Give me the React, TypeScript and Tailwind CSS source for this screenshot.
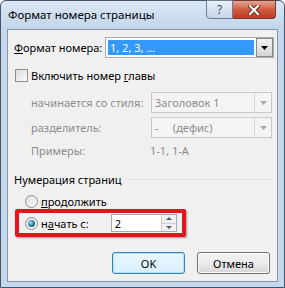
import React from "react";

function Arrow({ disabled }: { disabled?: boolean }) {
  return (
    <svg width="7" height="4" viewBox="0 0 7 4">
      <path d="M0 0h7L3.5 4z" fill={disabled ? "#a8a8a8" : "#000"} />
    </svg>
  );
}

function Radio({ checked }: { checked?: boolean }) {
  return (
    <span className="w-[13px] h-[13px] rounded-full border border-[#8f8f8f] bg-gradient-to-br from-[#e0e0e0] to-[#fafafa] flex items-center justify-center shrink-0">
      {checked && (
        <span className="w-[7px] h-[7px] rounded-full bg-[radial-gradient(circle_at_35%_35%,#9be0f5,#1e6f96_60%,#0d3c5e)]" />
      )}
    </span>
  );
}

function DisabledCombo({ text }: { text: string }) {
  return (
    <div className="ml-auto shrink-0 w-[121px] h-[21px] border border-[#c9c9c9] bg-[#f4f4f4] flex items-stretch">
      <span className="flex-1 pl-[3px] text-[#8c8c8c] flex items-center whitespace-pre">{text}</span>
      <span className="w-[17px] border-l border-[#d6d6d6] flex items-center justify-center">
        <Arrow disabled />
      </span>
    </div>
  );
}

export default function App() {
  return (
    <div
      className="w-[285px] h-[288px] bg-[#c6d8ec] border border-[#3f5570] rounded-t-[6px] flex flex-col text-[11px] text-black leading-none whitespace-nowrap"
      style={{ fontFamily: '"Noto Sans", "DejaVu Sans", sans-serif' }}
    >
      {/* title bar */}
      <div className="h-[28px] relative bg-gradient-to-b from-[#dbe7f5] to-[#c2d5ea] rounded-t-[6px]">
        <span className="absolute left-[7px] top-[8px] text-[11.5px] text-black">
          Формат номера страницы
        </span>
        <div className="absolute right-[8px] top-[-1px] flex">
          <div className="w-[27px] h-[19px] border border-[#6b7f98] rounded-bl-[4px] bg-gradient-to-b from-[#e9f0f8] to-[#c5d5e7] flex items-center justify-center text-[12px] text-[#3b4b5e]">
            ?
          </div>
          <div className="w-[43px] h-[19px] border border-l-0 border-[#6b3a32] rounded-br-[4px] bg-gradient-to-b from-[#e6a595] via-[#cf5a43] to-[#c03a20] flex items-center justify-center">
            <svg width="12" height="10" viewBox="0 0 12 10">
              <path d="M2 1l8 8M10 1l-8 8" stroke="#5a2018" strokeWidth="4" strokeLinecap="square" />
              <path d="M2 1l8 8M10 1l-8 8" stroke="#fff" strokeWidth="2.2" strokeLinecap="square" />
            </svg>
          </div>
        </div>
      </div>

      {/* client area */}
      <div className="mx-[6px] h-[253px] border border-[#8396ae] bg-[#f0f0f0] flex flex-col">
        {/* format row */}
        <div className="mt-[7px] h-[21px] flex items-center pl-[6px] pr-[3px]">
          <span>
            <span className="underline">Ф</span>ормат номера:
          </span>
          <div className="ml-auto shrink-0 w-[169px] h-[21px] border border-[#a5acb5] bg-white flex items-stretch">
            <span className="flex-1 m-[2px] bg-[#3399ff] text-white pl-[2px] flex items-center">
              1, 2, 3, …
            </span>
            <span className="w-[17px] border border-[#8a8a8a] bg-gradient-to-b from-[#f2f2f2] to-[#d4d4d4] flex items-center justify-center">
              <Arrow />
            </span>
          </div>
        </div>

        {/* chapter checkbox */}
        <div className="mt-[9px] h-[16px] flex items-center pl-[7px]">
          <span className="w-[13px] h-[13px] border border-[#8e8f8f] bg-gradient-to-br from-[#dcdcdc] to-[#fbfbfb] mr-[3px]" />
          <span>
            Включить номер <span className="underline">г</span>лавы
          </span>
        </div>

        <div className="mt-[9px] flex items-center pl-[23px] pr-[5px] text-[#8c8c8c]">
          <span>начинается со стиля:</span>
          <DisabledCombo text="Заголовок 1" />
        </div>
        <div className="mt-[4px] flex items-center pl-[23px] pr-[5px] text-[#8c8c8c]">
          <span>разделитель:</span>
          <DisabledCombo text="-     (дефис)" />
        </div>
        <div className="mt-[4px] h-[16px] flex items-center pl-[23px] text-[#8c8c8c]">
          <span className="w-[119px]">Примеры:</span>
          <span>1-1, 1-A</span>
        </div>

        {/* group */}
        <div className="mt-[13px] h-[16px] flex items-center pl-[6px] pr-[5px]">
          <span>Нумерация страниц</span>
          <span className="flex-1 ml-[6px] h-0 border-t border-[#d5dfe5]" />
        </div>
        <div className="mt-[6px] h-[16px] flex items-center pl-[17px] gap-[3px]">
          <Radio />
          <span>
            <span className="underline">п</span>родолжить
          </span>
        </div>
        <div className="ml-[7px] w-[171px] h-[28px] border-[4px] border-[#e3141c] rounded-[2px] flex items-center pl-[6px] shadow-[1px_1px_2px_rgba(0,0,0,0.35)]">
          <Radio checked />
          <span className="ml-[3px]">
            н<span className="underline">а</span>чать с:
          </span>
          <div className="ml-[22px] w-[66px] h-[18px] border border-[#a5acb5] bg-white flex items-stretch">
            <span className="flex-1 pl-[3px] flex items-center">2</span>
            <span className="w-[15px] flex flex-col border-l border-[#d0d0d0]">
              <span className="flex-1 flex items-center justify-center bg-[#f0f0f0] border-b border-[#d0d0d0]">
                <svg width="6" height="3" viewBox="0 0 6 3">
                  <path d="M0 3h6L3 0z" fill="#4a5a6a" />
                </svg>
              </span>
              <span className="flex-1 flex items-center justify-center bg-[#f0f0f0]">
                <svg width="6" height="3" viewBox="0 0 6 3">
                  <path d="M0 0h6L3 3z" fill="#4a5a6a" />
                </svg>
              </span>
            </span>
          </div>
        </div>

        {/* buttons */}
        <div className="mt-[15px] flex pl-[104px] gap-[12px]">
          <div className="w-[73px] h-[22px] rounded-[3px] border border-[#3c7fb1] shadow-[inset_0_0_0_1px_#aee4fb] bg-gradient-to-b from-[#eaf6fd] to-[#d9f0fc] flex items-center justify-center">
            OK
          </div>
          <div className="w-[73px] h-[22px] rounded-[3px] border border-[#707070] shadow-[inset_0_0_0_1px_#fcfcfc] bg-gradient-to-b from-[#f2f2f2] via-[#ebebeb] to-[#d6d6d6] flex items-center justify-center">
            Отмена
          </div>
        </div>
      </div>
    </div>
  );
}
